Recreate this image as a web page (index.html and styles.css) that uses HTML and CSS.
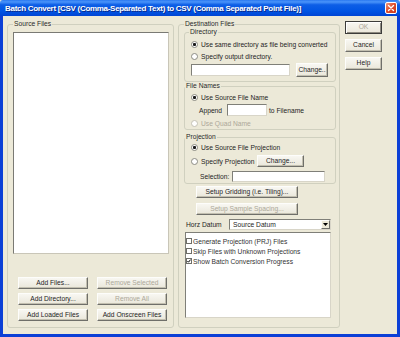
FILE: index.html
```html
<!DOCTYPE html>
<html lang="en">
<head>
    <meta charset="UTF-8">
    <title>Batch Convert</title>
    <link rel="stylesheet" href="styles.css">
</head>
<body>
    <div class="window">
        <div class="titlebar">
            <span class="title">Batch Convert [CSV (Comma-Separated Text) to CSV (Comma Separated Point File)]</span>
            <span class="close">
                <svg width="8" height="8" viewBox="0 0 8 8"><path d="M1.5 1.5 L6.5 6.5 M6.5 1.5 L1.5 6.5" stroke="#fff" stroke-width="1.4" stroke-linecap="round"/></svg>
            </span>
        </div>

        <div class="frame">
            <fieldset class="group source">
                <legend>Source Files</legend>
                <div class="listbox"></div>
                <div class="src-buttons">
                    <button class="btn">Add Files...</button>
                    <button class="btn" disabled>Remove Selected</button>
                    <button class="btn">Add Directory...</button>
                    <button class="btn" disabled>Remove All</button>
                    <button class="btn">Add Loaded Files</button>
                    <button class="btn">Add Onscreen Files</button>
                </div>
            </fieldset>

            <fieldset class="group dest">
                <legend>Destination Files</legend>

                <fieldset class="group sub dir">
                    <legend>Directory</legend>
                    <div class="row"><span class="radio checked"></span><span class="label">Use same directory as file being converted</span></div>
                    <div class="row gap"><span class="radio"></span><span class="label">Specify output directory.</span></div>
                    <div class="row tall">
                        <span class="textbox dir-path"></span>
                        <button class="btn change-dir">Change..</button>
                    </div>
                </fieldset>

                <fieldset class="group sub names">
                    <legend>File Names</legend>
                    <div class="row"><span class="radio checked"></span><span class="label">Use Source File Name</span></div>
                    <div class="row mid append">
                        <span class="append-label">Append</span>
                        <span class="textbox append-box"></span>
                        <span class="label">to Filename</span>
                    </div>
                    <div class="row gap disabled"><span class="radio"></span><span class="label">Use Quad Name</span></div>
                </fieldset>

                <fieldset class="group sub proj">
                    <legend>Projection</legend>
                    <div class="row"><span class="radio checked"></span><span class="label">Use Source File Projection</span></div>
                    <div class="row mid spec">
                        <span class="radio"></span><span class="label spec-label">Specify Projection</span>
                        <button class="btn change-proj">Change...</button>
                    </div>
                    <div class="row sel">
                        <span class="sel-label">Selection:</span>
                        <span class="textbox sel-box"></span>
                    </div>
                </fieldset>

                <button class="btn wide gridding">Setup Gridding (i.e. Tiling)...</button>
                <button class="btn wide spacing" disabled>Setup Sample Spacing...</button>

                <div class="datum">
                    <span class="datum-label">Horz Datum</span>
                    <div class="combo">
                        <span class="combo-text">Source Datum</span>
                        <span class="combo-arrow">
                            <svg width="5" height="3" viewBox="0 0 5 3"><path d="M0 0 H5 L2.5 3 Z" fill="#000"/></svg>
                        </span>
                    </div>
                </div>

                <div class="checklist">
                    <div class="check-item"><span class="checkbox"></span>Generate Projection (PRJ) Files</div>
                    <div class="check-item"><span class="checkbox"></span>Skip Files with Unknown Projections</div>
                    <div class="check-item">
                        <span class="checkbox">
                            <svg width="4" height="4" viewBox="0 0 4 4"><path d="M0.4 2 L1.5 3.2 L3.6 0.6" stroke="#000" stroke-width="1" fill="none"/></svg>
                        </span>Show Batch Conversion Progress
                    </div>
                </div>
            </fieldset>

            <div class="side-buttons">
                <button class="btn default" disabled>OK</button>
                <button class="btn">Cancel</button>
                <button class="btn">Help</button>
            </div>
        </div>
    </div>
</body>
</html>
```

FILE: styles.css
```css
* {
    box-sizing: border-box;
    margin: 0;
    padding: 0;
}

body {
    width: 400px;
    height: 337px;
    overflow: hidden;
    font-family: 'Liberation Sans', Arial, sans-serif;
    font-size: 6.7px;
    color: #1e1e1e;
    background-color: #ece9d8;
}

.window {
    width: 400px;
    height: 337px;
    display: flex;
    flex-direction: column;
}

.titlebar {
    height: 16px;
    flex: none;
    display: flex;
    align-items: center;
    justify-content: space-between;
    padding: 0 3px 0 5px;
    border-radius: 3px 3px 0 0;
    background: linear-gradient(#2a78f0 0%, #4a94fa 12%, #0d5ee6 30%, #0054e3 70%, #0045d4 100%);
}

.title {
    color: white;
    font-weight: bold;
    font-size: 8px;
    letter-spacing: -0.3px;
    white-space: nowrap;
    text-shadow: 1px 1px 0 #0b2a8a;
}

.close {
    width: 12px;
    height: 12px;
    border: 1px solid #fff;
    border-radius: 2px;
    background: linear-gradient(135deg, #f09a82 0%, #e0512f 45%, #c8361a 100%);
    display: flex;
    align-items: center;
    justify-content: center;
}

.frame {
    flex: 1;
    display: flex;
    background-color: #ece9d8;
    border: solid #0b3fd6;
    border-width: 0 3px 3px 3px;
    padding: 4px 0 6px 4px;
}

/* group boxes */
.group {
    border: 1px solid #d0d0bf;
    border-radius: 3px;
    min-width: 0;
}

.group legend {
    padding: 0 1px;
    line-height: 8px;
    color: #2a2a2a;
}

.source {
    width: 167px;
    padding: 4px 4px 6px 5px;
}

.listbox {
    height: 222px;
    background-color: white;
    border: 1px solid;
    border-color: #7a7a74 #c9c6b8 #c9c6b8 #7a7a74;
}

.src-buttons {
    margin-top: 23px;
    padding-left: 5px;
    display: grid;
    grid-template-columns: 70px 70px;
    column-gap: 9px;
    row-gap: 4px;
}

.src-buttons .btn {
    height: 12px;
}

.dest {
    width: 162px;
    margin-left: 4px;
    padding: 0 3px 0 5px;
    display: flex;
    flex-direction: column;
}

.sub {
    width: 152px;
    padding-left: 6px;
}

.sub legend {
    margin-left: -6px;
}

.dir legend {
    margin-left: -2px;
}

.dir {
    padding-top: 3px;
    padding-bottom: 4px;
}

.names {
    padding-top: 2px;
    padding-bottom: 1px;
}

.proj {
    margin-top: 3px;
    padding-top: 1px;
    padding-bottom: 1px;
}

/* rows of controls */
.row {
    display: flex;
    align-items: center;
    height: 10px;
    white-space: nowrap;
}

.row.gap {
    margin-top: 2px;
}

.row.mid {
    height: 12px;
    margin-top: 2px;
}

.row.tall {
    height: 14px;
    margin-top: 2px;
}

.proj .row.mid {
    margin-top: 3px;
}

.radio {
    width: 7px;
    height: 7px;
    flex: none;
    border-radius: 50%;
    border: 1px solid #8c8c84;
    background-color: white;
    margin-right: 3px;
}

.radio.checked {
    background: radial-gradient(circle, #1a1a1a 0, #1a1a1a 1.3px, white 1.8px);
}

.disabled {
    color: #aca899;
}

.disabled .radio {
    border-color: #c4c2b6;
}

.textbox {
    display: block;
    height: 12px;
    background-color: white;
    border: 1px solid;
    border-color: #7f7f78 #d8d5c8 #d8d5c8 #7f7f78;
}

.dir-path {
    width: 99px;
}

.change-dir {
    width: 32px;
    height: 14px;
    margin-left: 6px;
}

.append {
    padding-left: 8px;
}

.append-label {
    width: 28px;
}

.append-box {
    width: 40px;
    margin-right: 2px;
}

.spec-label {
    width: 56px;
}

.change-proj {
    width: 47px;
    height: 12px;
}

.sel {
    height: 11px;
    margin-top: 4px;
    padding-left: 9px;
}

.sel-label {
    width: 32px;
}

.sel-box {
    width: 93px;
    height: 11px;
}

/* buttons */
.btn {
    font-family: inherit;
    font-size: 6.7px;
    color: #1e1e1e;
    background: linear-gradient(#f8f7f2, #eae7da);
    border: 1px solid;
    border-color: #fdfdfb #6f6f6a #6f6f6a #fdfdfb;
    box-shadow: inset -1px -1px 0 #c2bfb0;
    white-space: nowrap;
    line-height: 1;
}

.btn:disabled {
    color: #aca899;
}

.wide {
    width: 102px;
    height: 12px;
    margin-left: 12px;
}

.gridding {
    margin-top: 2px;
}

.spacing {
    margin-top: 5px;
}

.datum {
    display: flex;
    align-items: center;
    margin-top: 4px;
    height: 11px;
    padding-left: 2px;
}

.datum-label {
    width: 43px;
}

.combo {
    width: 102px;
    height: 11px;
    display: flex;
    align-items: center;
    justify-content: space-between;
    background-color: white;
    border: 1px solid;
    border-color: #7f7f78 #d8d5c8 #d8d5c8 #7f7f78;
    padding-left: 3px;
}

.combo-arrow {
    width: 9px;
    height: 9px;
    display: flex;
    align-items: center;
    justify-content: center;
    background-color: #ece9d8;
    border: 1px solid;
    border-color: #fdfdfb #6f6f6a #6f6f6a #fdfdfb;
}

.checklist {
    width: 146px;
    height: 86px;
    margin-top: 2px;
    margin-left: 1px;
    background-color: white;
    border: 1px solid;
    border-color: #7f7f78 #d8d5c8 #d8d5c8 #7f7f78;
    padding: 3px 0 0 0;
}

.check-item {
    display: flex;
    align-items: center;
    height: 10px;
    white-space: nowrap;
    color: #333;
}

.checkbox {
    width: 6px;
    height: 6px;
    flex: none;
    margin-right: 1px;
    border: 1px solid #6e6e68;
    background-color: white;
    display: flex;
    align-items: center;
    justify-content: center;
}

.side-buttons {
    margin-left: 5px;
    width: 37px;
    padding-top: 1px;
    display: flex;
    flex-direction: column;
    gap: 5px;
}

.side-buttons .btn {
    height: 13px;
}

.btn.default {
    border-color: #3c3c3a;
    box-shadow: inset 1px 1px 0 #fff, inset -1px -1px 0 #8d8a80;
}
```
